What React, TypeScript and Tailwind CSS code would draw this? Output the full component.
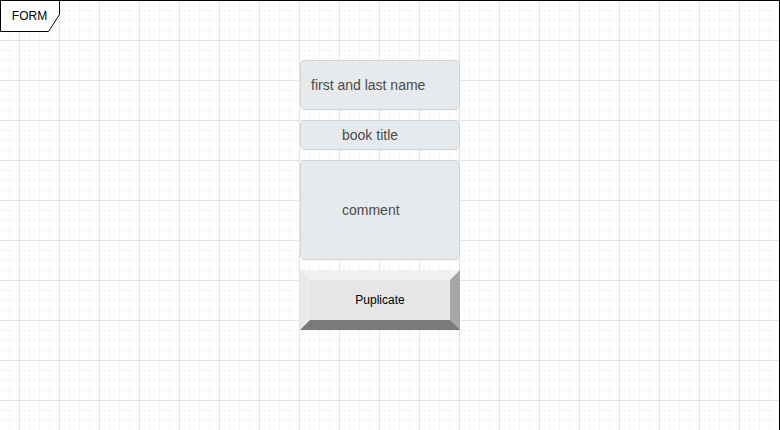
const font = { fontFamily: "'Liberation Sans', Arial, sans-serif" }

function Field({ label, h, pl }: { label: string; h: string; pl: string }) {
  return (
    <div
      className={`${h} ${pl} flex items-center rounded-[5px] border border-[#d1d5da] bg-[#e7eaed] text-[14px] text-[#4a4a4a]`}
      style={font}
    >
      {label}
    </div>
  )
}

export default function App() {
  return (
    <div
      className="relative w-[780px] h-[430px] overflow-hidden border-t border-r border-black bg-white bg-[linear-gradient(to_right,#e4e4e4_1px,transparent_1px),linear-gradient(to_bottom,#e4e4e4_1px,transparent_1px),linear-gradient(to_right,#f5f5f5_1px,transparent_1px),linear-gradient(to_bottom,#f5f5f5_1px,transparent_1px)] [background-size:40px_40px,40px_40px,10px_10px,10px_10px] [background-position:19px_0,0_-1px,9px_0,0_-1px]"
      style={font}
    >
      <div className="absolute left-0 top-[-1px] w-[61px] h-[32px]">
        <svg width="61" height="32" className="absolute inset-0">
          <polygon points="0.5,0.5 59.5,0.5 59.5,14.5 48.5,31.5 0.5,31.5" fill="#fff" stroke="#000" strokeWidth="1" />
        </svg>
        <div className="relative flex h-[32px] w-[59px] items-center justify-center text-[12px] text-black pb-[1px]">FORM</div>
      </div>

      <div className="ml-[300px] mt-[59px] flex w-[160px] flex-col gap-[10px]">
        <Field label="first and last name" h="h-[50px]" pl="pl-[10px]" />
        <Field label="book title" h="h-[30px]" pl="pl-[41px]" />
        <Field label="comment" h="h-[100px]" pl="pl-[41px]" />
        <div className="box-border flex h-[60px] items-center justify-center border-[10px] border-t-[#f0f0f0] border-l-[#eaeaea] border-r-[#a6a6a6] border-b-[#7a7a7a] bg-[#e6e6e6] text-[12px] text-black">
          Puplicate
        </div>
      </div>
    </div>
  )
}
